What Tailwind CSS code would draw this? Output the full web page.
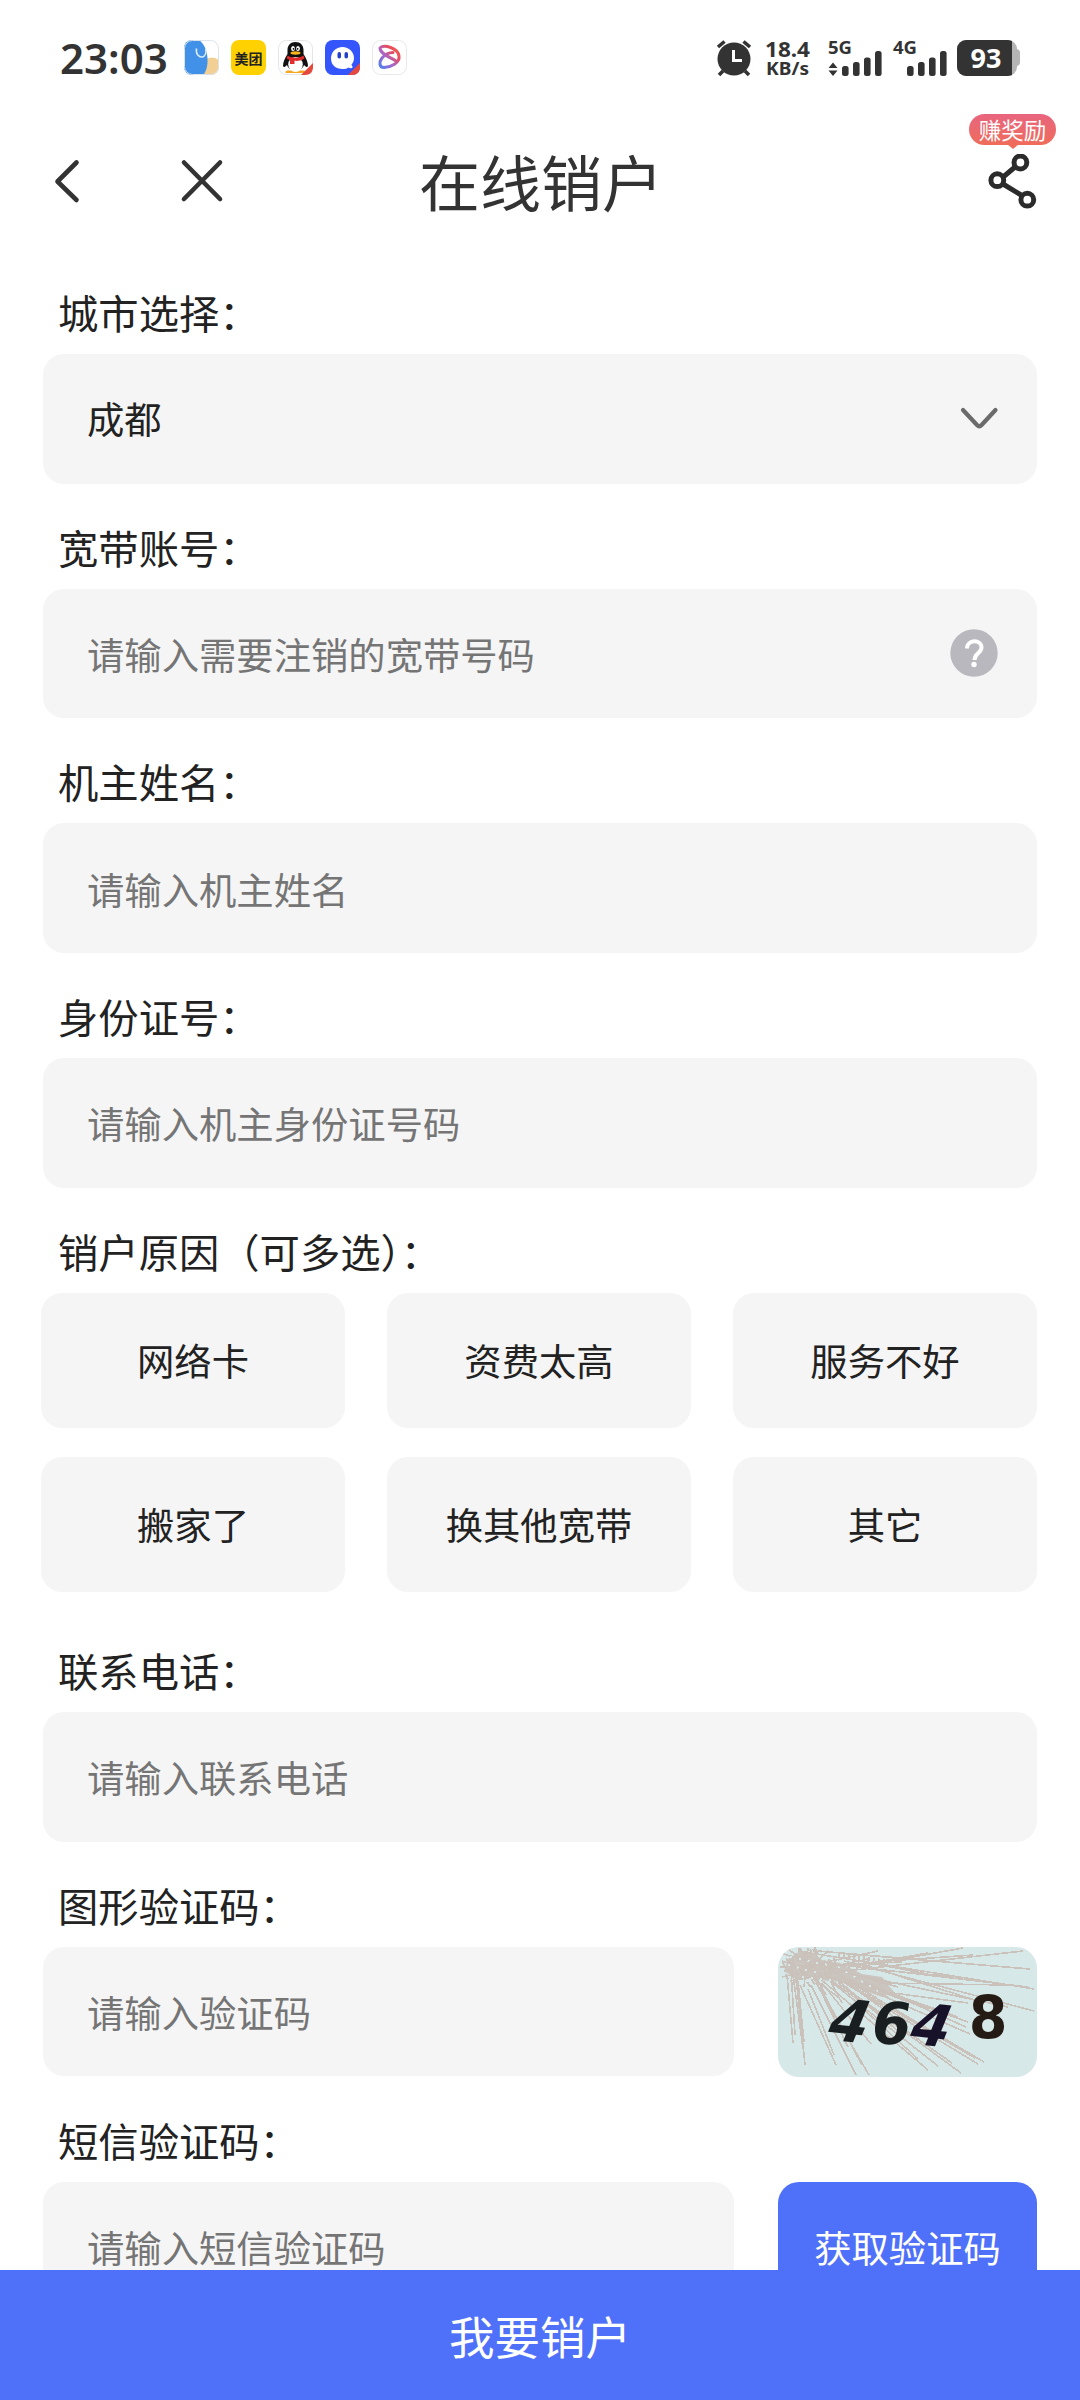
<!DOCTYPE html>
<html lang="zh-CN">
  <head>
    <meta charset="utf-8" />
    <meta name="viewport" content="width=device-width, initial-scale=1" />
    <title>在线销户</title>
    <script src="https://cdn.jsdelivr.net/npm/@tailwindcss/browser@4"></script>
  </head>
  <body class="bg-white">
    <div class="relative w-[1080px] h-[2400px] overflow-hidden bg-white text-[#222] font-['Noto_Sans_CJK_SC',sans-serif]">

      <!-- 状态栏 -->
      <div class="flex items-center justify-between h-[115px] pl-[60px] pr-[60px] text-[#333]">
        <div class="flex items-center">
          <span class="w-[124px] text-[42px] leading-none font-semibold whitespace-nowrap font-['Noto_Sans',sans-serif]">23:03</span>
          <div class="flex gap-3">
            <svg class="w-[35px] h-[35px]" viewBox="0 0 35 35">
              <clipPath id="app"><rect width="35" height="35" rx="8" /></clipPath>
              <g clip-path="url(#app)">
                <rect width="35" height="35" fill="#fff" />
                <circle cx="28" cy="28" r="10.500" fill="#f2cf94" />
                <path d="M0 0H15C21 4 24 13 23.500 23C23 29 21 33 19 35H0Z" fill="#4191e8" />
                <path d="M12.500 8.500C11.500 14 15 17.500 18.500 17C21 16.500 22.300 13 21.800 9" fill="none" stroke="#d9ecff" stroke-width="1.600" />
              </g>
              <rect x=".5" y=".5" width="34" height="34" rx="8" fill="none" stroke="#dde3ea" />
            </svg>
            <span class="flex items-center justify-center w-[35px] h-[35px] rounded-lg bg-[#ffd100] text-[14px] leading-none font-bold text-[#222]">美团</span>
            <svg class="w-[35px] h-[35px]" viewBox="0 0 35 35">
              <rect x=".5" y=".5" width="34" height="34" rx="8" fill="#fff" stroke="#e5e5e5" />
              <path d="M9 33C6 33 7 30.500 11 30.500H25C28 30.500 28 33 25 33Z" fill="#f5a623" />
              <path d="M17.500 2C12.500 2 9.500 5.500 9.500 10V14C7 18 5 22 5 26C6 28.500 8 26 9 25C11 32 24 32 26 25C27 26 29 28.500 30 26C30 22 28 18 25.500 14V10C25.500 5.500 22.500 2 17.500 2Z" fill="#111" />
              <ellipse cx="17.500" cy="24.500" rx="7.300" ry="7.500" fill="#fff" />
              <ellipse cx="15" cy="8.500" rx="1.900" ry="2.600" fill="#fff" />
              <ellipse cx="20" cy="8.500" rx="1.900" ry="2.600" fill="#fff" />
              <circle cx="15.500" cy="8.800" r=".9" /><circle cx="19.600" cy="8.800" r=".9" />
              <ellipse cx="17.500" cy="13" rx="5" ry="1.700" fill="#f8b51c" />
              <path d="M9.500 15.500C14 18.500 21 18.500 25.500 15.500L26.500 18.500C22 21 20 21 16.500 20.800V24H12V20C10.500 19.500 9.500 19 8.800 18.500Z" fill="#e32b2b" />
              <path d="M35 23V27C35 32 32 35 27 35H23Z" fill="#e5483c" />
            </svg>
            <svg class="w-[35px] h-[35px]" viewBox="0 0 35 35">
              <rect width="35" height="35" rx="8" fill="#3355fb" />
              <path d="M17.500 7C11 7 6 12 6 18.500S11 29 17.500 29C20 29 22 28.500 23.500 27.500C25 28.500 27 28.500 27.500 27.500C28 26.500 26.500 25.500 26.500 24.500C28 23 29 20.500 29 18C29 12 24 7 17.500 7Z" fill="#fff" />
              <rect x="12.500" y="12" width="3.500" height="6.500" rx="1.750" fill="#2340c8" />
              <rect x="19.500" y="12" width="3.500" height="6.500" rx="1.750" fill="#2340c8" />
              <path d="M35 23V27C35 32 32 35 27 35H23Z" fill="#e5483c" />
            </svg>
            <svg class="w-[35px] h-[35px]" viewBox="0 0 35 35">
              <defs>
                <linearGradient id="ring" x1="0" y1="1" x2="1" y2="0">
                  <stop offset="0" stop-color="#4f7df0" />
                  <stop offset=".4" stop-color="#a868c8" />
                  <stop offset=".7" stop-color="#e84a5f" />
                  <stop offset="1" stop-color="#f06a50" />
                </linearGradient>
              </defs>
              <rect x=".5" y=".5" width="34" height="34" rx="8" fill="#fff" stroke="#e8e8e8" />
              <path d="M8 8C12 4 26 8 27 16C28 23 19 27 12 27.500C7 27.500 7 22 10 18C13 14.500 17 12.500 21 12.500M8 8C8 14 18 17 24 21" fill="none" stroke="url(#ring)" stroke-width="3" stroke-linecap="round" />
            </svg>
          </div>
        </div>

        <div class="flex items-center">
          <svg class="w-[38px] h-[38px] mr-[11px]" viewBox="0 0 38 38">
            <circle cx="19" cy="20" r="16.500" fill="#333" />
            <path d="M3 8L9.500 2.500M35 8L28.500 2.500M8 32L4 36M30 32L34 36" stroke="#333" stroke-width="3.600" fill="none" />
            <path d="M18.500 11V21.500H27" stroke="#fff" stroke-width="3" fill="none" />
          </svg>
          <svg class="w-[48px] h-[38px] mr-[16px]" viewBox="0 0 48 38" font-family="Noto Sans" font-weight="700" fill="#333">
            <text x="1" y="17.500" font-size="21.500" textLength="45" lengthAdjust="spacingAndGlyphs">18.4</text>
            <text x="2" y="36" font-size="17.500" textLength="43" lengthAdjust="spacingAndGlyphs">KB/s</text>
          </svg>
          <svg class="w-[55px] h-[36px] mr-[10px] overflow-visible" viewBox="0 0 55 36">
            <text x="0" y="13.500" font-family="Noto Sans" font-weight="700" font-size="18.500" fill="#333">5G</text>
            <path d="M5 22.500L9.500 28H.5ZM5 36L.5 30.500H9.500Z" fill="#333" />
            <g fill="#333">
              <rect x="14" y="26" width="6.600" height="10" rx="2.500" />
              <rect x="25" y="22" width="6.600" height="14" rx="2.500" />
              <rect x="36" y="17.500" width="6.600" height="18.500" rx="2.500" />
              <rect x="47" y="11" width="6.600" height="25" rx="2.500" />
            </g>
          </svg>
          <svg class="w-[55px] h-[36px] mr-[9px] overflow-visible" viewBox="0 0 55 36">
            <text x="0" y="13.500" font-family="Noto Sans" font-weight="700" font-size="18.500" fill="#333">4G</text>
            <g fill="#333">
              <rect x="14" y="26" width="6.600" height="10" rx="2.500" />
              <rect x="25" y="22" width="6.600" height="14" rx="2.500" />
              <rect x="36" y="17.500" width="6.600" height="18.500" rx="2.500" />
              <rect x="47" y="11" width="6.600" height="25" rx="2.500" />
            </g>
          </svg>
          <svg class="w-[63px] h-[36px]" viewBox="0 0 63 36">
            <clipPath id="bat"><rect width="60" height="36" rx="9" /></clipPath>
            <rect x="52" y="9" width="11" height="17" rx="4" fill="#b5b5b5" />
            <g clip-path="url(#bat)">
              <rect width="60" height="36" fill="#b5b5b5" />
              <rect width="55" height="36" fill="#333" />
            </g>
            <text x="29" y="28" text-anchor="middle" font-family="Noto Sans" font-weight="700" font-size="27" fill="#fff">93</text>
          </svg>
        </div>
      </div>

      <!-- 标题栏 -->
      <div class="relative flex items-center h-[134px] px-[50px] text-[#333]">
        <svg class="w-[36px] h-[50px]" viewBox="0 0 36 50" fill="none" stroke="#333" stroke-width="4.600" stroke-linecap="round" stroke-linejoin="round">
          <path d="M26.500 5.500L7.500 24.500L26.500 43" />
        </svg>
        <svg class="w-[50px] h-[50px] ml-[91px]" viewBox="0 0 50 50" fill="none" stroke="#333" stroke-width="4.600" stroke-linecap="round">
          <path d="M7 5.500L43 42M43 5.500L7 42" />
        </svg>
        <h1 class="ml-[192px] pb-[4px] text-[61px] leading-none">在线销户</h1>
        <svg class="w-[52px] h-[56px] ml-auto -mr-[10px]" viewBox="0 0 52 56" fill="none" stroke="#2b2b2b" stroke-width="5">
          <path d="M27 13L14 24M15 30L33 41" />
          <circle cx="32.400" cy="8.500" r="6.400" />
          <circle cx="9.300" cy="26.200" r="6.400" />
          <circle cx="39.300" cy="45.700" r="6.400" />
        </svg>
        <div class="absolute left-[969px] -top-px flex items-center justify-center w-[87px] h-[31px] rounded-full bg-linear-to-b from-[#e8657f] to-[#ef6c5a] text-white text-[22.500px] leading-none">
          赚奖励
          <span class="absolute left-[38px] top-[30px] border-x-[6px] border-t-[5px] border-x-transparent border-t-[#ef6c5a]"></span>
        </div>
      </div>

      <!-- 表单 -->
      <div class="px-[43px]">
        <div class="pt-[21px]">
          <div class="pl-[15px] text-[40.320px] leading-[84px]">城市选择：</div>
          <div class="flex items-center justify-between h-[129.670px] pl-[44px] pr-[37px] rounded-[21px] bg-[#f5f5f5] text-[37.330px]">
            <span>成都</span>
            <svg class="w-[41px] h-[26px]" viewBox="0 0 41 26" fill="none" stroke="#6b6b6b" stroke-width="4.200" stroke-linecap="round" stroke-linejoin="round">
              <path d="M4 4L18 19Q20.300 21.300 22.600 19L36.500 4" />
            </svg>
          </div>
        </div>

        <div class="pt-[21px]">
          <div class="pl-[15px] text-[40.320px] leading-[84px]">宽带账号：</div>
          <div class="flex items-center justify-between h-[129.670px] pl-[44px] pr-[39px] rounded-[21px] bg-[#f5f5f5] text-[37.330px] text-[#757575]">
            <span class="pt-[4px]">请输入需要注销的宽带号码</span>
            <svg class="w-[48px] h-[48px]" viewBox="0 0 48 48">
              <circle cx="24" cy="24" r="23.700" fill="#b8b8be" />
              <path d="M17 19.500C17 10 31.500 10 31.500 18.500C31.500 24 24.500 24 24.500 31" fill="none" stroke="#fff" stroke-width="4" stroke-linecap="butt" />
              <circle cx="24" cy="35.500" r="2.700" fill="#fff" />
            </svg>
          </div>
        </div>

        <div class="pt-[21px]">
          <div class="pl-[15px] text-[40.320px] leading-[84px]">机主姓名：</div>
          <div class="flex items-center h-[129.670px] pt-[3px] pl-[44px] rounded-[21px] bg-[#f5f5f5] text-[37.330px] text-[#757575]">请输入机主姓名</div>
        </div>

        <div class="pt-[21px]">
          <div class="pl-[15px] text-[40.320px] leading-[84px]">身份证号：</div>
          <div class="flex items-center h-[129.670px] pt-[3px] pl-[44px] rounded-[21px] bg-[#f5f5f5] text-[37.330px] text-[#757575]">请输入机主身份证号码</div>
        </div>

        <div class="pt-[21px] pb-[15.500px]">
          <div class="pl-[15px] text-[40.320px] leading-[84px]">销户原因（可多选）：</div>
          <div class="grid grid-cols-3 gap-x-[42px] gap-y-[29px] -ml-[2px] text-[37.330px]">
            <div class="flex items-center justify-center h-[135px] pt-[2px] rounded-[21px] bg-[#f5f5f5]">网络卡</div>
            <div class="flex items-center justify-center h-[135px] pt-[2px] rounded-[21px] bg-[#f5f5f5]">资费太高</div>
            <div class="flex items-center justify-center h-[135px] pt-[2px] rounded-[21px] bg-[#f5f5f5]">服务不好</div>
            <div class="flex items-center justify-center h-[135px] pt-[2px] rounded-[21px] bg-[#f5f5f5]">搬家了</div>
            <div class="flex items-center justify-center h-[135px] pt-[2px] rounded-[21px] bg-[#f5f5f5]">换其他宽带</div>
            <div class="flex items-center justify-center h-[135px] pt-[2px] rounded-[21px] bg-[#f5f5f5]">其它</div>
          </div>
        </div>

        <div class="pt-[21px]">
          <div class="pl-[15px] text-[40.320px] leading-[84px]">联系电话：</div>
          <div class="flex items-center h-[129.670px] pt-[3px] pl-[44px] rounded-[21px] bg-[#f5f5f5] text-[37.330px] text-[#757575]">请输入联系电话</div>
        </div>

        <div class="pt-[21px]">
          <div class="pl-[15px] text-[40.320px] leading-[84px]">图形验证码：</div>
          <div class="flex justify-between">
            <div class="flex items-center w-[691px] h-[129.670px] pt-[3px] pl-[44px] rounded-[21px] bg-[#f5f5f5] text-[37.330px] text-[#757575]">请输入验证码</div>
            <svg class="w-[259px] h-[130px] rounded-[21px] bg-[#d7e8e8]" viewBox="0 0 259 130">
              <!-- 干扰线 -->
              <g fill="none" stroke="#c9c1ba" stroke-width="1.600" shape-rendering="crispEdges">
                <path d="M9 28L15 96M13 24L17 88M18 30L27 118M14 20L25 102M20 34L26 95M22 38L58 118M30 42L56 108M33 38L78 128M38 36L91 128M42 40L84 118M36 30L70 100M44 36L93 97" />
                <path d="M40 30L150 123M52 34L160 119M48 28L140 112M60 36L183 126M66 40L174 116M56 30L120 84M60 32L200 117M64 31L206 115M72 38L197 111M80 44L130 80" />
                <path d="M62 30L192 87M70 32L190 75M76 30L188 80M84 36L180 70M90 40L150 62M66 14L256 64M60 24L230 60M80 16L200 54M100 44L190 56" />
                <path d="M20 4L256 42M30 14L250 40M60 10L150 27M90 22L180 30M100 36L230 38M60 6L252 22M40 4L180 16M50 26L245 4M90 18L185 1M70 20L150 6M110 14L195 8" />
                <path d="M2 6L120 40M4 14L110 50M6 24L100 4M2 20L124 15M10 2L90 60M20 2L100 52M4 30L90 12M12 34L80 22M26 40L30 1M8 12L60 50M14 38L50 4M22 1L48 48M35 2L64 56" />
              </g>
              <path d="M10 12L22 4L36 6L44 13L62 16L84 27L104 30L116 45L104 50L82 42L66 35L50 34L34 31L18 32L6 24Z" fill="#c9c1ba" opacity=".9" />
              <g fill="none" stroke="#c9c1ba" stroke-width="6" stroke-dasharray="2 3" shape-rendering="crispEdges">
                <path d="M5 18L40 2M8 30L60 12M30 38L56 22M60 8L110 16" />
              </g>
              <g fill="none" stroke="#d7e8e8" stroke-width="2" stroke-dasharray="2 7" shape-rendering="crispEdges">
                <path d="M12 10L50 18M10 18L40 26M24 30L60 34M60 20L100 44" />
              </g>
              <g font-family="DejaVu Sans" font-weight="700" font-size="58" text-anchor="middle">
                <text transform="translate(64 94) rotate(6) skewX(-16) scale(.97 1.01)" fill="#191f21">4</text>
                <text transform="translate(110 97) rotate(2) skewX(-8) scale(.97 1)" fill="#191f21">6</text>
                <text transform="translate(146 98) rotate(6) skewX(-16) scale(.97 1)" fill="#17122a">4</text>
                <text transform="translate(210 91) scale(.96 1.02)" fill="#241c14">8</text>
              </g>
            </svg>
          </div>
        </div>

        <div class="pt-[21px]">
          <div class="pl-[15px] text-[40.320px] leading-[84px]">短信验证码：</div>
          <div class="flex justify-between">
            <div class="flex items-center w-[691px] h-[129.670px] pt-[3px] pl-[44px] rounded-[21px] bg-[#f5f5f5] text-[37.330px] text-[#757575]">请输入短信验证码</div>
            <div class="flex items-center justify-center w-[259px] h-[129.670px] pt-[2px] rounded-[21px] bg-[#4f70f8] text-[37.330px] text-white">获取验证码</div>
          </div>
        </div>
      </div>

      <div class="absolute inset-x-0 bottom-0 flex items-center justify-center h-[130px] bg-[#4f70f8] text-[45.500px] text-white">我要销户</div>
    </div>
  </body>
</html>
